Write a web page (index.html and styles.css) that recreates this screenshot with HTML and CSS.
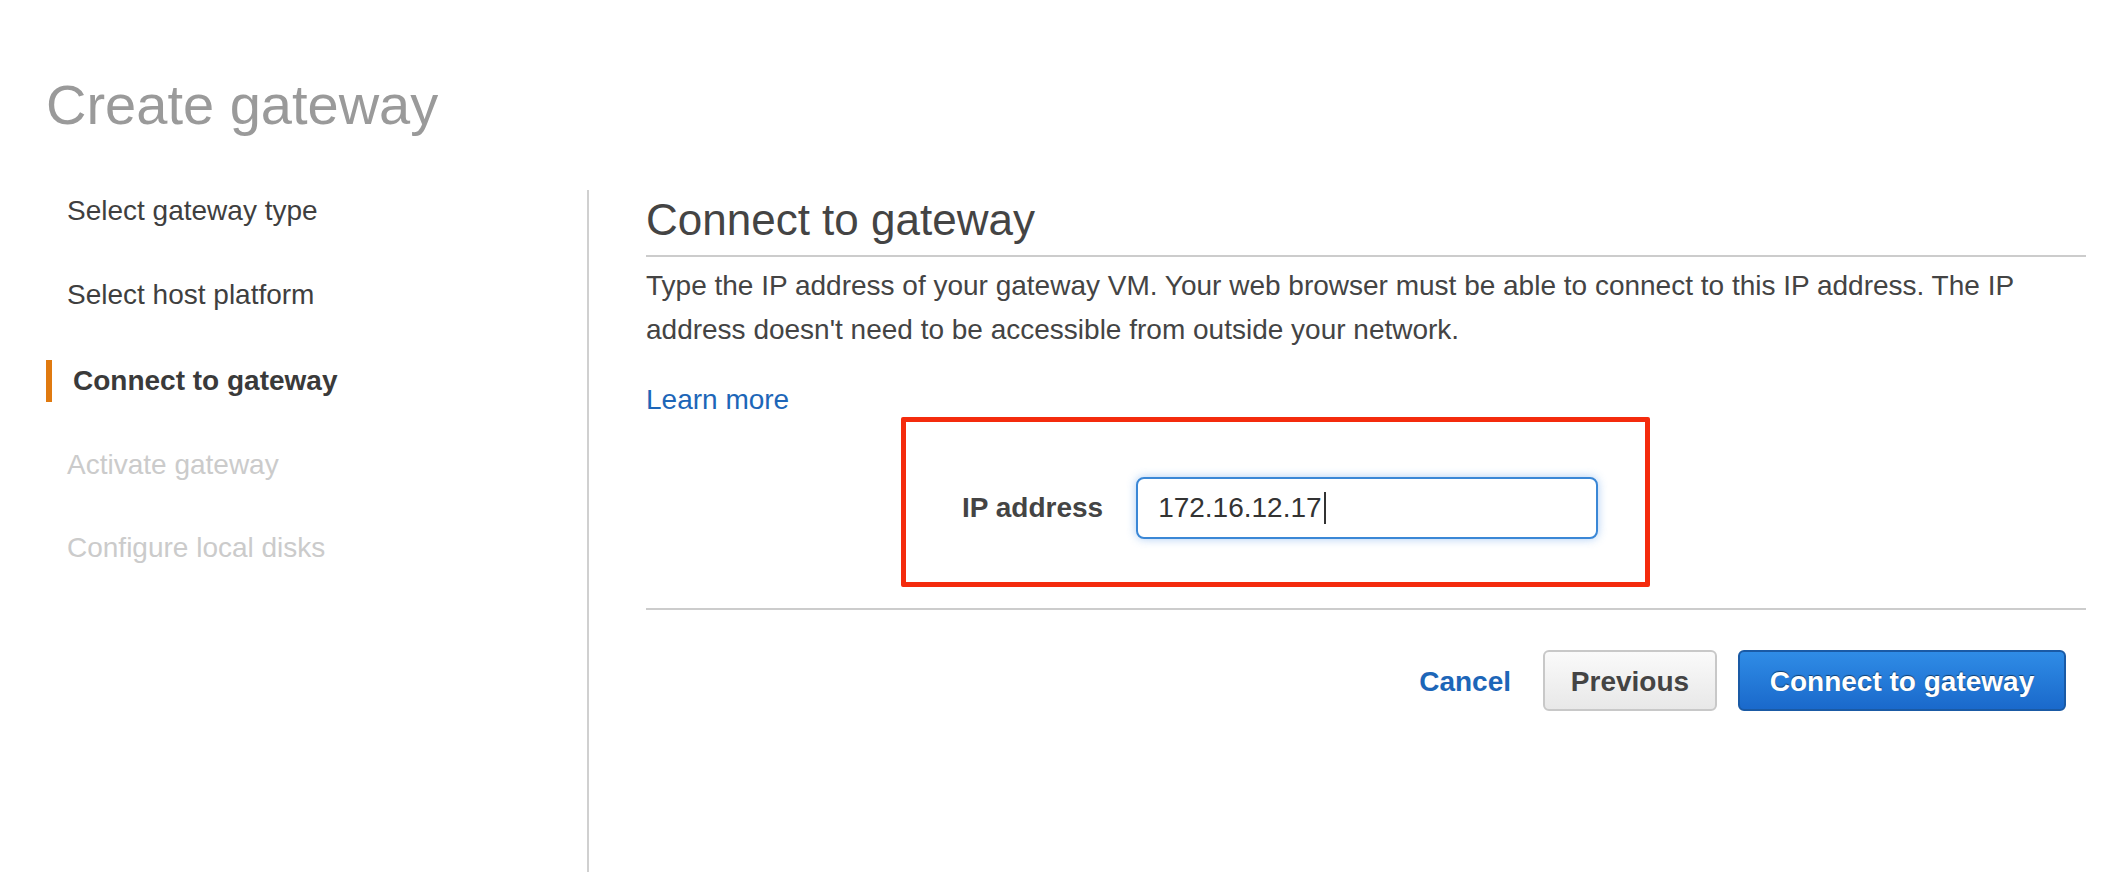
FILE: index.html
```html
<!DOCTYPE html>
<html lang="en">
<head>
<meta charset="utf-8">
<title>Create gateway</title>
<link rel="stylesheet" href="styles.css">
</head>
<body>
<div class="page">
  <h1 class="page-title">Create gateway</h1>
  <div class="wizard">
    <nav class="steps">
      <div class="step">Select gateway type</div>
      <div class="step">Select host platform</div>
      <div class="step step-active">Connect to gateway</div>
      <div class="step step-disabled">Activate gateway</div>
      <div class="step step-disabled">Configure local disks</div>
    </nav>
    <main class="content">
      <h2 class="section-title">Connect to gateway</h2>
      <p class="description">Type the IP address of your gateway VM. Your web browser must be able to connect to this IP address. The IP address doesn't need to be accessible from outside your network.</p>
      <a class="learn-more" href="#">Learn more</a>
      <div class="highlight">
        <label class="field-label">IP address</label>
        <div class="text-input" role="textbox">172.16.12.17<span class="caret"></span></div>
      </div>
      <div class="actions">
        <a class="btn-link" href="#">Cancel</a>
        <button class="btn btn-secondary">Previous</button>
        <button class="btn btn-primary">Connect to gateway</button>
      </div>
    </main>
  </div>
</div>
</body>
</html>
```

FILE: styles.css
```css
html, body {
  margin: 0;
  padding: 0;
  background: #ffffff;
}

body {
  font-family: "Liberation Sans", Arial, Helvetica, sans-serif;
  color: #444444;
}

.page {
  min-height: 100vh;
  box-sizing: border-box;
  display: flex;
  flex-direction: column;
  padding: 0 24px 0 46px;
}

.page-title {
  margin: 0 0 53px 0;
  padding-top: 73px;
  font-size: 56px;
  line-height: 64px;
  font-weight: normal;
  color: #9a9a9a;
}

.wizard {
  flex: 1;
  display: flex;
}

.steps {
  width: 541px;
  flex: none;
  border-right: 2px solid #d0d0d0;
  display: flex;
  flex-direction: column;
  gap: 41.5px;
}

.step {
  font-size: 28px;
  line-height: 42px;
  padding-left: 21px;
  color: #3f3f3f;
}

.step-active {
  margin-top: 3px;
  font-weight: bold;
  border-left: 6px solid #e07a10;
  color: #3a3a3a;
}

.step-disabled {
  color: #cbcbcb;
}

.content {
  flex: 1;
  padding-left: 57px;
  display: flex;
  flex-direction: column;
}

.section-title {
  margin: 4px 0 0 0;
  font-size: 44px;
  line-height: 52px;
  font-weight: normal;
  color: #444444;
  padding-bottom: 9px;
  border-bottom: 2px solid #cccccc;
}

.description {
  margin: 7px 0 0 0;
  font-size: 28px;
  line-height: 44px;
  color: #444444;
}

.learn-more {
  align-self: flex-start;
  margin-top: 31px;
  font-size: 28px;
  line-height: 34px;
  color: #1d66b8;
  text-decoration: none;
}

.highlight {
  margin-left: 255px;
  width: 749px;
  height: 170px;
  box-sizing: border-box;
  border: 5px solid #f42b0d;
  border-radius: 2px;
  display: flex;
  align-items: center;
  padding: 12px 0 0 56px;
}

.field-label {
  font-size: 28px;
  font-weight: bold;
  color: #444444;
  margin-right: 33px;
}

.text-input {
  width: 462px;
  height: 62px;
  box-sizing: border-box;
  border: 2px solid #3a87d6;
  border-radius: 8px;
  box-shadow: 0 0 10px rgba(70, 145, 230, 0.45);
  padding-left: 20px;
  display: flex;
  align-items: center;
  font-size: 28px;
  color: #333333;
  background: #ffffff;
}

.caret {
  display: inline-block;
  width: 2px;
  height: 32px;
  margin-left: 2px;
  background: #333333;
}

.actions {
  margin-top: 21px;
  border-top: 2px solid #cccccc;
  padding: 40px 20px 0 0;
  display: flex;
  justify-content: flex-end;
  align-items: center;
}

.btn-link {
  font-size: 28px;
  font-weight: bold;
  color: #1d66b8;
  text-decoration: none;
  margin-right: 32px;
  padding-top: 3px;
}

.btn {
  font-family: "Liberation Sans", Arial, Helvetica, sans-serif;
  font-size: 28px;
  font-weight: bold;
  height: 61px;
  padding-top: 3px;
  border-radius: 6px;
  box-sizing: border-box;
  cursor: pointer;
}

.btn-secondary {
  width: 174px;
  color: #444444;
  background: linear-gradient(#fafafa, #e8e8e8);
  border: 2px solid #c8c8c8;
  margin-right: 21px;
}

.btn-primary {
  width: 328px;
  color: #ffffff;
  background: linear-gradient(#2f8ce6, #1a69cb);
  border: 2px solid #1a5aa5;
  text-shadow: 0 -1px 1px rgba(0, 0, 0, 0.5);
}
```
